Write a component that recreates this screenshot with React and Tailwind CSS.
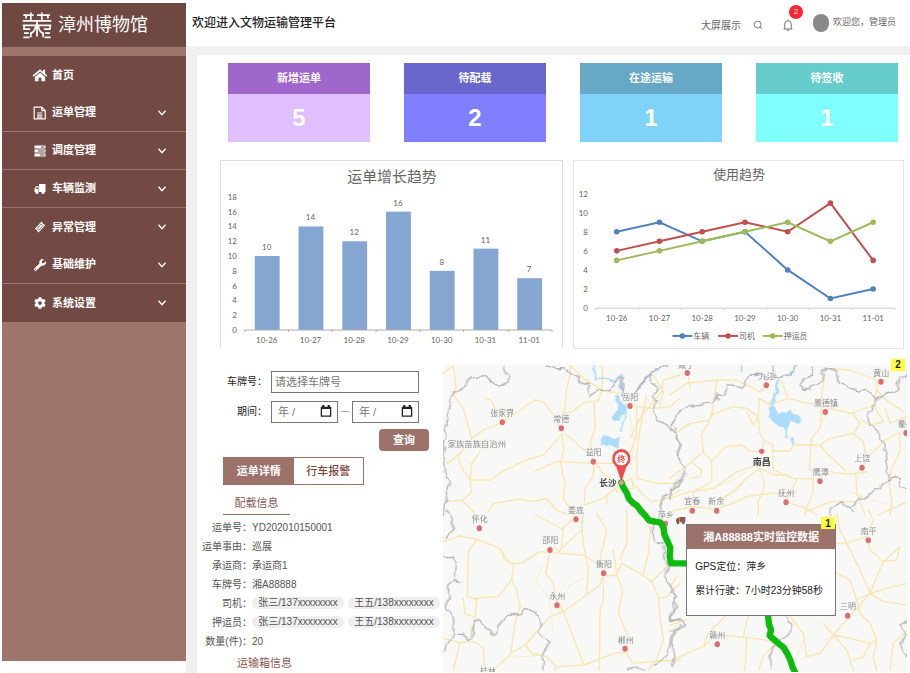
import { FaWrench, FaCog } from "react-icons/fa";
import { Search } from "lucide-react";

const HomeIcon = ({ className }) => (
  <svg viewBox="0 0 28 24" className={className} fill="currentColor">
    <path d="M14 2L1 13l2 2.200L14 6l11 9.200L27 13l-4-3.400V3h-4v3.200z" />
    <path d="M14 8L5 15.500V23h6.500v-6h5v6H23v-7.500z" />
  </svg>
);

const FileIcon = ({ className }) => (
  <svg viewBox="0 0 24 24" className={className} fill="none" stroke="currentColor" strokeWidth="2">
    <path d="M2 2h13l6 6v14H2zM15 2v6h6M7 12h9M7 15.500h9M7 19h9" />
  </svg>
);

const TasksIcon = ({ className }) => (
  <svg viewBox="0 0 24 24" className={className} fill="currentColor">
    <path d="M1 1h22v6H1zM1 9h22v6H1zM1 17h22v6H1z" />
    <path d="M14 3h7v2h-7zM8 11h13v2H8zM12 19h9v2h-9z" fill="#734a43" />
  </svg>
);

const TruckIcon = ({ className }) => (
  <svg viewBox="0 0 24 24" className={className} fill="currentColor">
    <path d="M10 2h13v16H10z" />
    <path d="M9 6H5L1 11v7h8zM7.500 8v4H3l3-4z" fillRule="evenodd" />
    <circle cx="6" cy="19" r="3" />
    <circle cx="18" cy="19" r="3" />
  </svg>
);

const TicketIcon = ({ className }) => (
  <svg viewBox="0 0 24 24" className={className} fill="currentColor">
    <path d="M15 1l2.500 2.500a2 2 0 0 0 2.500 2.500L22 9 9 23l-2.500-2.500A2 2 0 0 0 4 18l-2-3z" />
    <path d="M14.500 6L18 9.500 9.500 18.500 6 15z" fill="none" stroke="#734a43" strokeWidth="1.5" />
  </svg>
);

const Chevron = ({ className }) => (
  <svg viewBox="0 0 8 6" className={className} fill="none" stroke="currentColor" strokeWidth="1.3">
    <path d="M0.500 0.800L4 4.800L7.500 0.800" />
  </svg>
);

const BellIcon = ({ className }) => (
  <svg viewBox="0 0 20 24" className={className} fill="none" stroke="currentColor" strokeWidth="2">
    <path d="M1 20h18M3.500 20V10a6.500 6.500 0 0 1 13 0v10M10 3.500V1M8 22.500h4" />
  </svg>
);

const menu = [
  { label: "首页", icon: <HomeIcon className="h-3.5 w-4" />, leaf: true },
  { label: "运单管理", icon: <FileIcon className="size-3.5" />, line: true },
  { label: "调度管理", icon: <TasksIcon className="size-3" />, line: true },
  { label: "车辆监测", icon: <TruckIcon className="size-3" />, line: true },
  { label: "异常管理", icon: <TicketIcon className="size-3" /> },
  { label: "基础维护", icon: <FaWrench className="size-3" />, line: true },
  { label: "系统设置", icon: <FaCog className="size-3" /> },
];

const stats = [
  { title: "新增运单", value: 5, head: "bg-[#9f66cc]", body: "bg-[#dfbfff]" },
  { title: "待配载", value: 2, head: "bg-[#6966cc]", body: "bg-[#8080ff]" },
  { title: "在途运输", value: 1, head: "bg-[#66a8c6]", body: "bg-[#80d3f8]" },
  { title: "待签收", value: 1, head: "bg-[#66cccc]", body: "bg-[#80ffff]" },
];

const days = ["10-26", "10-27", "10-28", "10-29", "10-30", "10-31", "11-01"];
const orders = [10, 14, 12, 16, 8, 11, 7];
const usage = [
  { name: "车辆", color: "#4f81c0", data: [8, 9, 7, 8, 4, 1, 2], x: 99 },
  { name: "司机", color: "#c0504d", data: [6, 7, 8, 9, 8, 11, 5], x: 145 },
  { name: "押运员", color: "#9bbb59", data: [5, 6, 7, 8, 9, 7, 9], x: 190 },
];

const details = [
  { label: "运单号", value: "YD202010150001" },
  { label: "运单事由", value: "巡展" },
  { label: "承运商", value: "承运商1" },
  { label: "车牌号", value: "湘A88888" },
  { label: "司机", people: ["张三/137xxxxxxxx", "王五/138xxxxxxxx"] },
  { label: "押运员", people: ["张三/137xxxxxxxx", "王五/138xxxxxxxx"] },
  { label: "数量(件)", value: "20" },
];

const Logo = () => (
  <svg viewBox="0 0 88 80" className="h-7 w-7.5" fill="none" stroke="#fff" strokeWidth="5">
    <path d="M4 11h30M26 3v24M44 11h38M58 3v24M2 28h84M12 11v10M76 11v10" />
    <path d="M2 41h84M44 28v46M40 44Q38 60 26 64v12M48 44q2 16 14 20v12" />
    <path d="M6 41v11h18M6 64h14M4 76h18M82 41v11H64M82 64H68M66 76h18" />
  </svg>
);

const Sidebar = () => (
  <aside className="mt-[3px] mb-3 ml-[2px] w-46 shrink-0 bg-[#9d756d] text-white">
    <div className="flex h-11 items-center gap-1.5 bg-[#704842] pl-5">
      <Logo />
      <span className="text-[18px] leading-6">漳州博物馆</span>
    </div>
    <nav className="mt-[9px] bg-[#734a43]">
      {menu.map((item) => (
        <a
          key={item.label}
          href="#"
          className={`flex h-[38px] items-center pr-5 pl-[30px] text-[11px] font-bold ${item.line ? "border-b border-[#9d756d]" : ""}`}
        >
          <span className="mr-1 flex w-4 justify-center">{item.icon}</span>
          {item.label}
          {!item.leaf && <Chevron className="ml-auto h-1.5 w-2" />}
        </a>
      ))}
    </nav>
  </aside>
);

const Header = () => (
  <header className="flex h-[46px] items-center bg-white pr-3.5 pl-1.5 text-[#666]">
    <h1 className="text-[12px] font-medium text-[#222]">欢迎进入文物运输管理平台</h1>
    <a href="#" className="mt-1 ml-auto text-[10px]">大屏展示</a>
    <button aria-label="搜索" className="mt-1 ml-3">
      <Search className="size-2.5 text-[#888]" strokeWidth={2.5} />
    </button>
    <button aria-label="通知" className="relative mt-1 ml-5">
      <BellIcon className="h-3 w-2.5 text-[#777]" />
      <span className="absolute -top-3.5 left-1.5 flex size-3.5 items-center justify-center rounded-full bg-[#fa2430] text-[8px] text-white">
        2
      </span>
    </button>
    <span className="ml-5 h-4.5 w-4 rounded-full bg-[#8a8a8a]" />
    <span className="ml-1 text-[9px]">欢迎您，管理员</span>
  </header>
);

const StatCard = ({ title, value, head, body }) => (
  <div className="text-center font-bold text-white">
    <p className={`flex h-[31px] items-center justify-center text-[11px] ${head}`}>{title}</p>
    <p className={`flex h-12 items-center justify-center text-2xl ${body}`}>{value}</p>
  </div>
);

const BarChart = () => (
  <svg viewBox="0 0 343 188" className="w-full border border-b-0 border-[#ddd] font-[Lato,'Noto_Sans_CJK_SC',sans-serif]" textAnchor="middle" fill="#666">
    <text x="172" y="21" fontSize="15">运单增长趋势</text>
    {[0, 2, 4, 6, 8, 10, 12, 14, 16, 18].map((n) => (
      <text key={n} x="16" y={173 - n * 7.44} fontSize="8" textAnchor="end">{n}</text>
    ))}
    {orders.map((n, i) => (
      <g key={days[i]}>
        <rect x={34 + i * 44} y={170 - n * 7.44} width="25" height={n * 7.44} fill="#84a6d1" />
        <text x={46 + i * 44} y={164 - n * 7.44} fontSize="8">{n}</text>
        <text x={46 + i * 44} y="183" fontSize="8">{days[i]}</text>
      </g>
    ))}
    <path d="M24 170H333M24 170v2M68 170v2M112 170v2M156 170v2M200 170v2M244 170v2M289 170v2M333 170v2" stroke="#aaa" />
  </svg>
);

const LineChart = () => (
  <svg viewBox="0 0 331 188" className="w-full border border-[#e5e5e5] font-[Lato,'Noto_Sans_CJK_SC',sans-serif]" textAnchor="middle" fill="#666">
    <text x="166" y="18" fontSize="13">使用趋势</text>
    {[0, 2, 4, 6, 8, 10, 12].map((n) => (
      <text key={n} x="14" y={151 - n * 9.6} fontSize="8" textAnchor="end">{n}</text>
    ))}
    <path d="M22 148H323M22 148v2M65 148v2M108 148v2M151 148v2M194 148v2M237 148v2M280 148v2M323 148v2" stroke="#ccc" />
    {days.map((d, i) => (
      <text key={d} x={43 + i * 43} y="161" fontSize="8">{d}</text>
    ))}
    {usage.map((s) => (
      <g key={s.name}>
        <polyline
          points={s.data.map((n, i) => `${43 + i * 43},${148 - n * 9.6}`).join(" ")}
          fill="none"
          stroke={s.color}
          strokeWidth="2"
        />
        {s.data.map((n, i) => (
          <circle key={i} cx={43 + i * 43} cy={148 - n * 9.6} r="2.8" fill={s.color} />
        ))}
        <path d={`M${s.x} 176h20`} stroke={s.color} strokeWidth="2" />
        <circle cx={s.x + 10} cy="176" r="2.8" fill={s.color} />
        <text x={s.x + 21} y="179" fontSize="8" textAnchor="start">{s.name}</text>
      </g>
    ))}
  </svg>
);

const CalendarIcon = () => (
  <svg viewBox="0 0 12 13" className="pointer-events-none absolute top-1 right-1.5 h-3 w-3" fill="none" stroke="#222">
    <path d="M1 3h10v9H1z" strokeWidth="1.4" />
    <path d="M1 3h10M3 0v2M9 0v2" strokeWidth="2.4" />
  </svg>
);

const DateField = ({ label }) => (
  <span className="relative flex-1">
    <input
      aria-label={label}
      placeholder="年 /"
      className="block h-[22px] w-full border border-[#777] pl-1.5 text-[11px] placeholder:text-[#777]"
    />
    <CalendarIcon />
  </span>
);

const Detail = () => (
  <section className="w-[246px] shrink-0 text-[10px] text-[#555]">
    <form className="pt-1.5 pr-6 text-[#222]">
      <div className="mb-2 flex items-center">
        <label htmlFor="plate" className="w-[74px] pr-1 text-right">车牌号：</label>
        <input
          id="plate"
          placeholder="请选择车牌号"
          className="h-[22px] min-w-0 flex-1 border border-[#777] px-[3px] text-[11px] placeholder:text-[#777]"
        />
      </div>
      <div className="flex items-center">
        <span className="w-[74px] pr-1 text-right">期间：</span>
        <div className="flex flex-1 items-center">
          <DateField label="开始日期" />
          <span className="mx-[3px] w-2 border-t border-[#aaa]" />
          <DateField label="结束日期" />
        </div>
      </div>
      <div className="-mr-2.5 mt-1.5 flex justify-end">
        <button type="button" className="h-[22px] w-[50px] rounded bg-[#9d726b] text-[11px] font-bold text-white">
          查询
        </button>
      </div>
    </form>
    <div className="mt-1.5 ml-6.5 flex h-7 w-[141px] border border-[#9d6f67] text-[11px] font-bold">
      <button className="flex-1 bg-[#9d726b] text-white">运单详情</button>
      <button className="flex-1 font-medium text-[#7a443c]">行车报警</button>
    </div>
    <h2 className="ml-6.5 h-[30px] w-[67px] border-b border-[#9d6f67] text-center text-[11px] leading-9 text-[#8d5a52]">
      配载信息
    </h2>
    <dl className="mt-[3px] leading-[19px]">
      {details.map((row) => (
        <div key={row.label} className="flex">
          <dt className="w-[55px] text-right">{row.label}：</dt>
          {row.people ? (
            <dd className="flex items-center gap-1">
              {row.people.map((p) => (
                <span key={p} className="w-[92px] rounded-full bg-[#efefef] text-center leading-3">
                  {p}
                </span>
              ))}
            </dd>
          ) : (
            <dd>{row.value}</dd>
          )}
        </div>
      ))}
    </dl>
    <h2 className="ml-10 text-[11px] leading-6 text-[#8d5a52]">运输箱信息</h2>
  </section>
);

const cities = [
  ["张家界", 178, 144, 178, 172],
  ["常德", 355, 163, 355, 190],
  ["益阳", 452, 262, 451, 290],
  ["岳阳", 562, 96, 561, 123],
  ["娄底", 399, 436, 399, 463],
  ["怀化", 110, 461, 109, 490],
  ["邵阳", 322, 526, 321, 555],
  ["衡阳", 483, 597, 482, 625],
  ["永州", 343, 693, 342, 721],
  ["郴州", 548, 824, 546, 851],
  ["萍乡", 668, 449, 667, 476],
  ["咸宁", 730, 0, 733, 24],
  ["九江", 971, 32, 970, 61],
  ["景德镇", 1149, 113, 1147, 141],
  ["黄山", 1315, 23, 1314, 50],
  ["衢州", 1390, 176, 1389, 204],
  ["上饶", 1258, 280, 1257, 308],
  ["鹰潭", 1133, 320, 1131, 349],
  ["抚州", 1030, 384, 1029, 412],
  ["宜春", 748, 409, 748, 437],
  ["新余", 820, 409, 821, 437],
  ["南平", 1277, 497, 1276, 526],
  ["三明", 1215, 723, 1214, 752],
  ["赣州", 823, 810, 823, 838],
];

// drawn at three units per pixel, one group for each quarter of the map
const Map = () => (
  <div className="relative min-w-0 flex-1 self-start">
    <svg viewBox="0 0 1392 921" className="w-full bg-[#f8f8f6] font-['Noto_Sans_CJK_SC',sans-serif]" strokeLinejoin="round" strokeLinecap="round">
      {/* uneven edges for hand-placed lines */}
      <filter id="rough" x="0" y="0" width="1392" height="921" filterUnits="userSpaceOnUse">
        <feTurbulence type="fractalNoise" baseFrequency="0.035" numOctaves="2" seed="4" />
        <feDisplacementMap in="SourceGraphic" scale="22" xChannelSelector="R" yChannelSelector="G" />
      </filter>
      <g fill="none" stroke="#fce5ae" strokeWidth="4">
        <g transform="translate(-9 -30)">
          <path d="M10 55L40 32L48 90L42 122L70 160L95 250L60 295L25 325L10 320M95 250L135 222L188 202L240 165L285 135L310 140L345 185L365 220M135 128L155 138L170 170L188 202M120 290L95 325L90 375L150 375L195 345L260 315L310 300L350 255L365 238M55 296L60 330L90 375M365 220L376 150L378 110L390 60L390 30M365 180L395 170L435 142L475 138L485 108L530 112L560 130L590 155L640 160L690 155L720 130M390 30L430 70L470 95L485 108L488 60L485 30M462 142L465 220L450 270L462 318M372 235L405 260L430 285L455 285L462 318L490 355L530 385M285 348L350 320L460 325L545 325M365 238L372 280L362 325L375 385L370 430L400 480M462 325L460 365L435 400L433 450L490 430L535 390M20 440L70 435L95 410L90 375M70 440L100 470L105 480M145 470L160 445L240 432L275 440L320 432L350 465L385 480M590 155L590 240L560 320L545 385M570 250L600 190L640 140L665 110L670 75L720 60M620 120L600 220L590 300L592 370L650 385L720 385M545 385L575 370L580 400L530 410L520 385M500 420L500 450M580 385L610 420L635 440L680 430L720 405M640 60L670 110L660 150" />
        </g>
        <g transform="translate(681 -30)">
          <path d="M0 120L50 85L140 75L200 75L270 110L290 90M55 55L60 100M140 80L128 160L128 180L95 240L100 290L60 325L0 370M15 235L60 205L120 195L128 160M128 178L190 155L230 160L265 185L268 230L280 255M265 185L268 130L300 150L355 130L335 80L320 65M355 130L400 142L455 153M465 60L455 120L452 215L425 250L418 345L480 350L525 358L565 355L600 300L645 255L690 232L690 290L665 340L657 380M470 40L540 45L620 75L620 105L655 140L700 170M620 105L610 150L545 175L500 165L455 153M610 150L640 200L600 210L575 195M645 160L660 205L710 185M550 235L570 205L548 175M550 235L480 250L450 270L370 270L360 288L308 288L310 345L370 370L430 372M280 255L308 268L308 290M280 260L270 340L230 370L190 410L150 435M275 290L240 290L215 270L165 275L125 320L100 290M125 320L125 380L70 410L65 440M270 340L310 360L350 360L380 375L360 415L348 440L410 460L440 480M270 340L285 390L265 440L265 480M0 430L60 410L130 400L200 350L265 330M0 470L65 455L140 462L200 440L230 425L300 415L380 410M430 372L430 410L408 460L405 480M450 270L475 300L525 345L525 358M550 235L580 260L590 320M557 355L562 420L585 480M657 380L665 440L660 480M590 350L570 355M70 325L95 345L90 365L60 370M410 470L480 440L560 440M625 480L680 455L710 440M230 170L250 210L265 185" />
        </g>
        <g transform="translate(-9 435)">
          <path d="M10 95L60 78L110 88L180 115L210 160L245 160L300 125L350 130L370 110L425 60L430 10M110 88L85 125L82 260L110 270L105 330L90 380M105 265L175 260L215 210L220 165M215 210L230 240L240 290L225 340L212 430L255 405L330 320L370 305L440 255L480 225L490 190M330 115L318 190L340 220L345 260L370 305L430 460M345 110L360 130L430 135L470 160M370 60L345 45L285 15M400 28L370 50L365 110M425 30L430 100L445 180L440 255M470 10L500 60L480 150M490 200L530 195L548 240L535 310L565 380L560 430L580 460L640 455L720 450M490 195L490 270L480 300L478 480M520 120L530 190L545 160L600 190L635 215L655 260L660 320L670 390L650 450L625 480M540 150L560 100L560 0M615 0L630 60L625 130L610 190M635 215L680 170M655 265L680 260L720 220M10 385L60 398L105 395L130 415L135 480M60 398L40 480M255 405L275 430L320 440L350 470L430 465L530 428L560 430M160 480L210 435M345 480L350 470M180 115L195 150L215 160M70 265L75 310L100 320" />
        </g>
        <g transform="translate(681 435)">
          <path d="M0 455L40 435L100 410L115 370L165 320M100 410L140 375L200 380L250 385L320 395M220 380L235 320M230 385L225 480M320 395L280 440L265 480M360 320L400 370L410 440L450 430L490 375L460 340M490 375L540 385L600 400L620 390M500 100L530 100L570 180L600 250L640 275L714 285M500 10L510 60L530 100L590 80M500 190L540 210L560 270L600 250L640 155L690 110M560 270L570 310L600 340L620 390L610 440L620 480M640 155L600 120L590 80L610 30L595 0M640 155L680 150L690 110M600 250L530 330L490 375M714 220L670 230L600 250M490 375L530 420L550 480M714 360L670 400L660 480M600 400L580 440L550 450M0 345L50 330M20 200L0 230" />
        </g>
      </g>
      <g fill="none" stroke="#fdeec8" strokeWidth="3">
        <path d="M560 150L575 230L560 330M300 600L280 650L320 700L330 800M780 380L860 350L910 320M1080 830L1050 900M1180 100L1130 180M180 880L300 870M1220 380L1330 420M420 640L380 660L350 740" />
      </g>
      <g filter="url(#rough)">
        <g fill="#abdcfc" stroke="none">
          <path d="M515 94l14 4 12 20 10 4-4 22-14 8-2 18-14 0-6-14 10-18 4-18-6-12zM476 214l26 0 14 6 14-4-4 28-12 6-22-8-14-4z" />
          <path d="M981 122l14 6 14 22 20-8 14-12 4 16 16 4 10 18-14 6-16-2-10 20-2 20 6 4-4 6-6-6 0-20-10-12-20-6-16-24zM1042 218l8-2 4 20-6 6z" />
        </g>
        <g fill="none" stroke="#abdcfc" strokeWidth="5">
          <path d="M455 2L458 44L485 42L520 54L540 30M550 115L548 150L530 200M890 0L900 20" />
          <path d="M1000 50L1002 80L985 115" strokeWidth="10" />
          <path d="M670 2L635 12L595 60L570 90M535 50L538 90M925 26L970 34L1010 40L1050 20L1060 2" stroke="#9fb9e0" />
        </g>
        <g fill="none" stroke="#b4b4b8" strokeWidth="4">
          <g transform="translate(-9 -30)">
            <path d="M190 32L192 48L210 65L200 82L178 95L150 80L135 65L85 70L70 95L42 108L25 150L22 185L15 205L18 240L10 260L14 330L20 370L28 378L20 430L12 450L10 480M315 32L345 40L375 42L405 62L430 82L445 92L450 120L480 105L510 100L530 80L548 70L552 95L548 120L575 125L600 90L632 55L635 85L655 98L642 120L652 140L640 165L655 195L685 215L710 240L718 270L712 300L720 320M720 375L700 395L690 415L668 425L660 470" />
          </g>
          <g transform="translate(681 -30)">
            <path d="M0 210L15 195L18 180L40 160L75 152L130 140L145 120L168 115L170 88L215 95L235 65L260 55L290 75L315 60L310 30M10 215L18 250L28 270L22 310L40 335L42 360L20 398L5 405L0 430M470 38L458 60L455 80L430 92L420 108L395 105L390 90L405 65L425 60L430 35M470 38L500 55L510 80L540 100L600 110L615 140L605 165L590 180L600 210L622 230L640 270L645 320L655 375L635 385L632 400L580 430L555 448L535 460L518 438L480 460L485 480M612 135L640 122L680 100L695 65L711 58M655 375L690 370L692 395L711 400M138 118L148 135" />
          </g>
          <g transform="translate(-9 435)">
            <path d="M20 0L40 30L38 55L15 80M10 140L40 140L48 170L45 205L60 218M45 205L20 225L28 250L15 290L40 320L42 370L70 370L80 392L95 385L100 340L115 330L145 352L160 375L180 340L200 310L235 315L260 295L300 315L302 350L295 370L310 385L330 395L315 425L308 440L305 480M42 370L22 400L10 425M640 40L640 75L645 95L670 100L670 145L682 170L675 205L700 240L708 260L700 290L692 335L720 325M720 345L698 360L690 400L680 435L645 470M565 480L590 465L610 480" />
          </g>
          <g transform="translate(681 435)">
            <path d="M0 245L15 250L20 290L5 310L0 330M0 330L38 330L40 345L15 360L5 395L15 440L0 470M350 322L365 345L350 380L330 390L310 420L300 440L305 480M530 -10L550 5M714 335L690 350L705 375L690 400L711 440" />
          </g>
        </g>
      </g>
      <g fontSize="24" fill="#8b8b8b" textAnchor="middle" stroke="#f8f8f6" strokeWidth="4" paintOrder="stroke">
        {cities.map(([name, tx, ty, cx, cy]) => (
          <g key={name}>
            <text x={tx} y={ty + 9}>{name}</text>
            <ellipse cx={cx} cy={cy} rx="8" ry="9" fill="#e06c6c" />
          </g>
        ))}
        <text x="14" y="247" textAnchor="start" fontSize="25">家族苗族自治州</text>
        <text x="135" y="928">桂林</text>
        <text x="956" y="300" fontSize="27" fontWeight="bold" fill="#444">南昌</text>
        <text x="495" y="363" fontSize="26" fontWeight="bold" fill="#444">长沙</text>
        <circle cx="956" cy="259" r="8" fill="#e06c6c" />
      </g>
      <path
        d="M535 352L540 365L552 385L558 402L572 415L582 422L594 438L607 452L618 466L636 470L652 472L662 490L664 508L674 530L682 548L680 575L684 595L735 595M975 750L978 778L984 794L980 812L1000 830L1022 848L1034 868L1042 885L1048 905L1058 925"
        fill="none"
        stroke="#0cbc0c"
        strokeWidth="19"
      />
      <g>
        <path d="M535 350L520 305Q507 295 508 280A27 28 0 1 1 562 280Q563 295 550 305Z" fill="#ef4b4b" />
        <circle cx="535" cy="281" r="20" fill="#fff" />
        <text x="535" y="290" fontSize="24" fontWeight="bold" textAnchor="middle" fill="#ef4b4b">终</text>
        <circle cx="535" cy="353" r="7" fill="#e59a9a" />
      </g>
      <g fill="#8d5a52">
        <path d="M709 456h18v16h-18zM699 464l5-6h4v14h-9z" />
        <circle cx="705" cy="474" r="4" />
        <circle cx="721" cy="474" r="4" />
      </g>
    </svg>
    <div className="absolute top-[52%] left-[52.4%] w-[150px] border border-[#777] bg-white text-[10px] text-[#222]">
      <h3 className="flex h-6 items-center justify-center bg-[#9d726b] text-[11px] font-bold text-white">
        湘A88888实时监控数据
      </h3>
      <div className="space-y-2 px-2 pt-2.5 pb-4">
        <p className="leading-4">GPS定位：萍乡</p>
        <p className="leading-4">累计行驶：7小时23分钟58秒</p>
      </div>
      <Badge className="-top-2 right-0">1</Badge>
    </div>
    <Badge className="-top-1.5 right-0.5">2</Badge>
  </div>
);

const Badge = ({ className, children }) => (
  <span className={`absolute flex h-3 w-3.5 items-center justify-center bg-[#ffff3c] text-[10px] font-bold text-[#222] ${className}`}>
    {children}
  </span>
);

export default function App() {
  return (
    <div className="flex h-screen overflow-hidden bg-white font-['Liberation_Sans','Noto_Sans_CJK_SC',sans-serif]">
      <Sidebar />
      <div className="min-w-0 flex-1">
        <Header />
        <div className="bg-[#f0f0f0] pt-[9px] pl-[11px]">
          <main className="bg-white pt-2">
            <div className="grid grid-cols-4 gap-[34px] pr-3 pl-[31px]">
              {stats.map((s) => (
                <StatCard key={s.title} {...s} />
              ))}
            </div>
            <div className="mt-[18px] grid grid-cols-[343fr_331fr] gap-2.5 pr-1.5 pl-[23px]">
              <BarChart />
              <LineChart />
            </div>
            <div className="mt-4 flex pr-[3px]">
              <Detail />
              <Map />
            </div>
          </main>
        </div>
      </div>
    </div>
  );
}
